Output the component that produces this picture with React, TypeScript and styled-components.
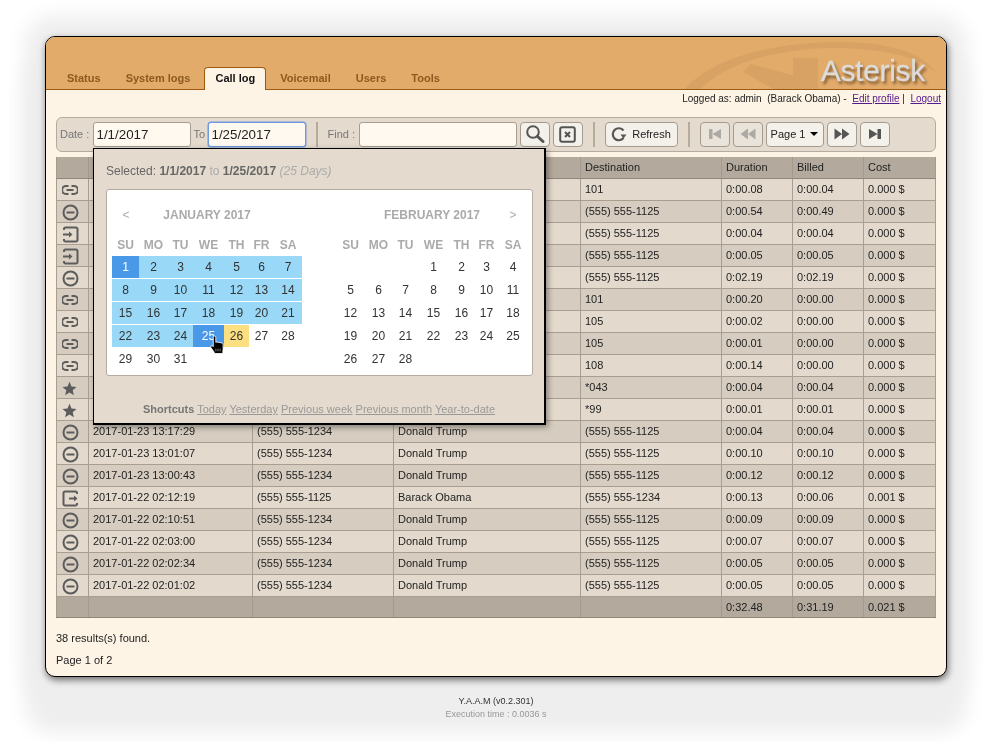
import React from "react";
import styled, { createGlobalStyle } from "styled-components";

const Global = createGlobalStyle`
  html, body { margin: 0; padding: 0; background: #fff; }
  body { font-family: "Liberation Sans", Arial, sans-serif; color: #333; overflow: hidden; }
`;
const Page = styled.div`
  width: 986px; height: 742px; padding: 36px 0 0 45px; box-sizing: border-box; overflow: hidden; will-change: transform;
`;
const Win = styled.div`
  width: 902px; height: 641px; box-sizing: border-box;
  border: 1px solid #000; border-radius: 10px; background: #fef4e6;
  box-shadow: 1px 3px 7px rgba(0,0,0,.55), 0 0 20px 20px #eee, 0 36px 20px 20px #eee;
`;
const Head = styled.header`
  position: relative; height: 53px; box-sizing: border-box; background: #e3ab6a;
  border-bottom: 1px solid #9c5a10; border-radius: 9px 9px 0 0;
  display: flex; align-items: flex-end; padding-left: 10px; gap: 3px;
`;
const Swoosh = styled.svg`
  position: absolute; right: 0; top: 0; width: 265px; height: 52px;
`;
const Brand = styled.div`
  position: absolute; right: 21px; top: 16px; font-size: 30px; line-height: 36px; letter-spacing: -.3px;
  color: #dcdcdc; -webkit-text-stroke: .3px #dcdcdc; text-shadow: 2px 3px 3px rgba(85,60,30,.75);
`;
const Tab = styled.a<{ $on?: boolean }>`
  position: relative; top: 1px; height: 23px; box-sizing: border-box; padding: 0 10px; line-height: 20px;
  font-size: 11px; font-weight: bold; color: ${p => (p.$on ? "#111" : "#8d5a1e")};
  background: ${p => (p.$on ? "#fef4e6" : "transparent")};
  border: 1px solid ${p => (p.$on ? "#9c5a10" : "transparent")}; border-bottom: 0;
  border-radius: 4px 4px 0 0;
`;
const Body = styled.main`padding: 0 10px;`;
const Logged = styled.div`
  height: 27px; box-sizing: border-box; text-align: right; font-size: 10px; line-height: 12px; padding: 3px 0 0; margin-right: -5px;
  color: #222; white-space: pre;
  a { color: #551a8b; text-decoration: underline; }
`;
const Bar = styled.div`
  position: relative; height: 35px; box-sizing: border-box; background: #e4dbce;
  border: 1px solid #b5aca0; border-radius: 6px;
  display: flex; align-items: center; padding: 0 0 1px 3px; gap: 3px;
`;
const Lbl = styled.span<{ $w: number }>`
  width: ${p => p.$w}px; font-size: 11px; color: #777; white-space: pre;
`;
const Field = styled.div<{ $w: number; $focus?: boolean }>`
  width: ${p => p.$w}px; height: 25px; box-sizing: border-box; background: #fff9ef;
  border: 1px solid ${p => (p.$focus ? "#6f9ae0" : "#a59d92")}; border-radius: 3px;
  box-shadow: ${p => (p.$focus ? "0 0 0 .5px #6f9ae0" : "none")};
  font-size: 13.33px; line-height: 23px; padding-left: 3px; color: #222;
`;
const Sep = styled.i`
  width: 2px; height: 25px; background: #b5aca0; margin: 0 7px;
`;
const Btn = styled.button<{ $off?: boolean; $w?: number }>`
  width: ${p => p.$w ?? 30}px; height: 25px; box-sizing: border-box; padding: 0;
  display: flex; align-items: center; justify-content: center; gap: 5px;
  font: 11px "Liberation Sans", Arial, sans-serif; color: #222;
  background: ${p => (p.$off ? "#e9e3da" : "#f4f0ea")};
  border: 1px solid #a39b90; border-radius: 4px;
  svg { opacity: ${p => (p.$off ? 0.4 : 1)}; }
`;
const Caret = styled.i`
  width: 0; height: 0; border: 4px solid transparent; border-top: 4px solid #000; border-bottom: 0; margin-left: 0;
`;
const Table = styled.table`
  width: 880px; table-layout: fixed; border-collapse: collapse; margin-top: 5px; font-size: 11px; color: #222;
  th, td { border: 1px solid #a89f92; padding: 0 0 0 4px; text-align: left; font-weight: normal; height: 22px; box-sizing: border-box; overflow: hidden; white-space: nowrap; }
  th { height: 21px; background: #b3aa9d; border-color: #a39a8d; border-top: 0; border-bottom-color: #8f877b; }
  tfoot td { background: #b3aa9d; height: 21px; border-color: #a39a8d; border-bottom-color: #8f877b; }
`;
const Row = styled.tr<{ $dark: boolean }>`
  background: ${p => (p.$dark ? "#d6cdc0" : "#e3dacd")};
`;
const IconCell = styled.td`
  && { padding: 2px 0 0 5px; text-align: left; line-height: 0; }
`;
const Note = styled.p`margin: 0; font-size: 11px; line-height: 22px; color: #222;`;
const Notes = styled.div`padding-top: 9px;`;
const Foot = styled.footer`
  width: 902px; padding-top: 18px; text-align: center; font-size: 9px; line-height: 13px; color: #333;
  small { display: block; font-size: 9px; color: #999; }
`;
const Popup = styled.div`
  position: absolute; left: 36px; top: 30px; width: 453px; height: 277px; box-sizing: border-box;
  background: #e4dbce; border: 1px solid #000; border-width: 1px 2px 2px 1px;
  box-shadow: 2px 2px 6px rgba(0,0,0,.4); padding: 0 12px; z-index: 5;
`;
const Sel = styled.div`
  height: 40px; line-height: 45px; font-size: 12px; color: #666;
  b { font-weight: bold; } em { color: #aaa; } span { color: #aaa; }
`;
const Panel = styled.div`
  width: 427px; height: 187px; box-sizing: border-box; background: #fff; border: 1px solid #b5aca0; border-radius: 3px;
  display: flex; gap: 35px; padding: 0 5px;
`;
const Month = styled.div`width: 190px;`;
const MonthHead = styled.div`
  display: flex; justify-content: space-between; height: 45px; align-items: center; padding: 4px 9px 0; box-sizing: border-box;
  font-size: 12px; font-weight: bold; color: #aaa;
`;
const Arrow = styled.span<{ $hide?: boolean }>`
  font-weight: normal; font-size: 12px; width: 10px; text-align: center; visibility: ${p => (p.$hide ? "hidden" : "visible")};
`;
const Grid = styled.div`
  display: grid; grid-template-columns: 27px 29px 25px 31px 25px 25px 28px; row-gap: 1px; text-align: center; font-size: 12px; color: #333;
`;
const Dow = styled.div`
  height: 20px; line-height: 20px; font-weight: bold; color: #aaa;
`;
const Day = styled.div<{ $k?: string }>`
  position: relative; height: 22px; line-height: 22px;
  background: ${p => ({ r: "#99d8f7", e: "#4a98e8", t: "#fbdf80" } as Record<string, string>)[p.$k ?? ""] ?? "transparent"};
  color: ${p => (p.$k === "e" ? "#fff" : "#333")};
`;
const Cursor = styled.svg`position: absolute; left: 17px; top: 11px; z-index: 2;`;
const Shortcuts = styled.div`
  margin-top: 27px; text-align: center; font-size: 11px; color: #999;
  b { color: #777; }
`;

const S = "#5c5c5c";
const Link = () => (
  <svg width="16" height="12" viewBox="0 0 16 12" fill="none" stroke={S} strokeWidth="2.200">
    <path d="M6.500 2H4a4 4 0 0 0 0 8h2.500M9.500 2H12a4 4 0 0 1 0 8H9.500M4.500 6h7" />
  </svg>
);
const Minus = () => (
  <svg width="17" height="17" viewBox="0 0 17 17" fill="none" stroke={S} strokeWidth="2">
    <circle cx="8.500" cy="8.500" r="7" /><path d="M4.500 8.500h8" />
  </svg>
);
const In = () => (
  <svg width="17" height="17" viewBox="0 0 17 17" fill="none" stroke={S} strokeWidth="2">
    <path d="M2 4V3a1.500 1.500 0 0 1 1.500-1.500H14A1.500 1.500 0 0 1 15.500 3v11a1.500 1.500 0 0 1-1.500 1.500H3.500A1.500 1.500 0 0 1 2 14v-1" />
    <path d="M1 8.500h6" /><path d="M7 5.500l3.500 3-3.500 3z" fill={S} stroke="none" />
  </svg>
);
const Out = () => (
  <svg width="17" height="17" viewBox="0 0 17 17" fill="none" stroke={S} strokeWidth="2">
    <path d="M15 4V3a1.500 1.500 0 0 0-1.500-1.500H3A1.500 1.500 0 0 0 1.500 3v11A1.500 1.500 0 0 0 3 15.500h10.500A1.500 1.500 0 0 0 15 14v-1" />
    <path d="M7 8.500h5" /><path d="M12 5.500l3.500 3-3.500 3z" fill={S} stroke="none" />
  </svg>
);
const Star = () => (
  <svg width="15" height="15" viewBox="0 0 15 15" fill={S}>
    <path d="M7.500.8l2 4.700 5 .4-3.800 3.300 1.200 5L7.500 11.500l-4.400 2.700 1.200-5L.5 5.900l5-.4z" />
  </svg>
);
const Search = () => (
  <svg width="20" height="20" viewBox="0 0 20 20" fill="none" stroke="#555">
    <circle cx="8" cy="8" r="5.800" strokeWidth="2" /><path d="M12.500 12.500l5.500 5" strokeWidth="3" strokeLinecap="round" />
  </svg>
);
const Clear = () => (
  <svg width="17" height="17" viewBox="0 0 17 17" fill="none" stroke="#555">
    <rect x="1.200" y="1.200" width="14.600" height="14.600" rx="2" strokeWidth="2" /><path d="M6 6l5 5M11 6l-5 5" strokeWidth="2" />
  </svg>
);
const Refresh = () => (
  <svg width="16" height="16" viewBox="0 0 16 16" fill="none" stroke="#555" strokeWidth="2.200">
    <path d="M12.500 4.500A6 6 0 1 0 12.500 12" /><path d="M9.500 8.500h6l-3 4z" fill="#555" stroke="none" />
  </svg>
);
const Nav = ({ d }: { d: string }) => (
  <svg width="18" height="12" viewBox="0 0 18 12" fill="#555"><path d={d} /></svg>
);
const Hand = () => (
  <Cursor width="15" height="18" viewBox="0 0 14 17">
    <path d="M3 1.200a1.200 1.200 0 0 1 2.400 0V6l1-.3 1.200.1.800.4 1.100-.1.900.5 1-.1.900.9v4.800L12 15.500l-.3 1H4.300l-.3-1-3.500-5 .5-1.300 1.500.2 .5 .6z" fill="#000" stroke="#fff" strokeWidth=".8" />
    <path d="M5.500 12v2.500M7.500 12v2.500M9.500 12v2.500" stroke="#aaa" strokeWidth=".7" />
  </Cursor>
);

type IconK = "l" | "m" | "i" | "o" | "s";
const icons: Record<IconK, React.ReactNode> = { l: <Link />, m: <Minus />, i: <In />, o: <Out />, s: <Star /> };

const T = "Donald Trump", P4 = "(555) 555-1234", P5 = "(555) 555-1125";
const rows: [IconK, string, string, string, string, string, string, string][] = [
  ["l", "", "", "", "101", "0:00.08", "0:00.04", "0.000 $"],
  ["m", "", "", "", P5, "0:00.54", "0:00.49", "0.000 $"],
  ["i", "", "", "", P5, "0:00.04", "0:00.04", "0.000 $"],
  ["i", "", "", "", P5, "0:00.05", "0:00.05", "0.000 $"],
  ["m", "", "", "", P5, "0:02.19", "0:02.19", "0.000 $"],
  ["l", "", "", "", "101", "0:00.20", "0:00.00", "0.000 $"],
  ["l", "", "", "", "105", "0:00.02", "0:00.00", "0.000 $"],
  ["l", "", "", "", "105", "0:00.01", "0:00.00", "0.000 $"],
  ["l", "", "", "", "108", "0:00.14", "0:00.00", "0.000 $"],
  ["s", "", "", "", "*043", "0:00.04", "0:00.04", "0.000 $"],
  ["s", "", "", "", "*99", "0:00.01", "0:00.01", "0.000 $"],
  ["m", "2017-01-23 13:17:29", P4, T, P5, "0:00.04", "0:00.04", "0.000 $"],
  ["m", "2017-01-23 13:01:07", P4, T, P5, "0:00.10", "0:00.10", "0.000 $"],
  ["m", "2017-01-23 13:00:43", P4, T, P5, "0:00.12", "0:00.12", "0.000 $"],
  ["o", "2017-01-22 02:12:19", P5, "Barack Obama", P4, "0:00.13", "0:00.06", "0.001 $"],
  ["m", "2017-01-22 02:10:51", P4, T, P5, "0:00.09", "0:00.09", "0.000 $"],
  ["m", "2017-01-22 02:03:00", P4, T, P5, "0:00.07", "0:00.07", "0.000 $"],
  ["m", "2017-01-22 02:02:34", P4, T, P5, "0:00.05", "0:00.05", "0.000 $"],
  ["m", "2017-01-22 02:01:02", P4, T, P5, "0:00.05", "0:00.05", "0.000 $"],
];
const widths = [32, 164, 141, 187, 141, 71, 71, 72];
const dows = ["SU", "MO", "TU", "WE", "TH", "FR", "SA"];

const kindOf = (d: number) => (d === 1 || d === 25 ? "e" : d === 26 ? "t" : d < 25 ? "r" : undefined);

function Cal({ title, lead, days, active, left, right }: { title: string; lead: number; days: number; active?: boolean; left?: boolean; right?: boolean }) {
  return (
    <Month>
      <MonthHead>
        <Arrow $hide={!left}>&lt;</Arrow>
        <span>{title}</span>
        <Arrow $hide={!right}>&gt;</Arrow>
      </MonthHead>
      <Grid>
        {dows.map(d => <Dow key={d}>{d}</Dow>)}
        {Array.from({ length: lead }, (_, i) => <Day key={"b" + i} />)}
        {Array.from({ length: days }, (_, i) => {
          const d = i + 1;
          return (
            <Day key={d} $k={active ? kindOf(d) : undefined}>
              {d}
              {active && d === 25 && <Hand />}
            </Day>
          );
        })}
      </Grid>
    </Month>
  );
}

export default function App() {
  return (
    <Page>
      <Global />
      <Win>
        <Head>
          <Swoosh viewBox="0 0 265 52">
            <g fill="#d8a264">
              <path d="M4 52C30 22 85 7 150 5c50-1 92 8 106 32C238 17 190 11 150 11 92 12 42 28 20 52z" />
              <path d="M112 21h25v31h-25z" />
              <path d="M62 35l8-8 52 14-2 11H92z" />
            </g>
          </Swoosh>
          <Brand>Asterisk</Brand>
          <Tab>Status</Tab>
          <Tab>System logs</Tab>
          <Tab $on>Call log</Tab>
          <Tab>Voicemail</Tab>
          <Tab>Users</Tab>
          <Tab>Tools</Tab>
        </Head>
        <Body>
          <Logged>
            {"Logged as: admin  (Barack Obama) -  "}<a>Edit profile</a>{" |  "}<a>Logout</a>
          </Logged>
          <Bar>
            <Lbl $w={29.500}>Date :</Lbl>
            <Field $w={98}>1/1/2017</Field>
            <Lbl $w={11}>To</Lbl>
            <Field $w={98} $focus>1/25/2017</Field>
            <Sep />
            <Lbl $w={28}>Find :</Lbl>
            <Field $w={158} />
            <Btn aria-label="Search"><Search /></Btn>
            <Btn aria-label="Clear"><Clear /></Btn>
            <Sep />
            <Btn $w={73}><Refresh />Refresh</Btn>
            <Sep />
            <Btn $off aria-label="First"><Nav d="M3 1h3.500v10H3zM15 1v10L6.500 6z" /></Btn>
            <Btn $off aria-label="Previous"><Nav d="M9 .500v11L1.500 6zM16.500 .500v11L9 6z" /></Btn>
            <Btn $w={58}>Page 1<Caret /></Btn>
            <Btn aria-label="Next"><Nav d="M1.500 .500v11L9 6zM9 .500v11L16.500 6z" /></Btn>
            <Btn aria-label="Last"><Nav d="M3 1v10l8.500-5zM11.500 1H15v10h-3.500z" /></Btn>
            <Popup>
              <Sel>Selected: <b>1/1/2017</b> <span>to</span> <b>1/25/2017</b> <em>(25 Days)</em></Sel>
              <Panel>
                <Cal title="JANUARY 2017" lead={0} days={31} active left />
                <Cal title="FEBRUARY 2017" lead={3} days={28} right />
              </Panel>
              <Shortcuts>
                <b>Shortcuts</b> <u>Today</u> <u>Yesterday</u> <u>Previous week</u> <u>Previous month</u> <u>Year-to-date</u>
              </Shortcuts>
            </Popup>
          </Bar>
          <Table>
            <colgroup>{widths.map((w, i) => <col key={i} width={w} />)}</colgroup>
            <thead>
              <tr><th /><th /><th /><th /><th>Destination</th><th>Duration</th><th>Billed</th><th>Cost</th></tr>
            </thead>
            <tbody>
              {rows.map((r, i) => (
                <Row key={i} $dark={i % 2 === 1}>
                  <IconCell>{icons[r[0]]}</IconCell>
                  {r.slice(1).map((c, j) => <td key={j}>{c}</td>)}
                </Row>
              ))}
            </tbody>
            <tfoot>
              <tr><td /><td /><td /><td /><td /><td>0:32.48</td><td>0:31.19</td><td>0.021 $</td></tr>
            </tfoot>
          </Table>
          <Notes>
            <Note>38 results(s) found.</Note>
            <Note>Page 1 of 2</Note>
          </Notes>
        </Body>
      </Win>
      <Foot>
        Y.A.A.M (v0.2.301)
        <small>Execution time : 0.0036 s</small>
      </Foot>
    </Page>
  );
}
